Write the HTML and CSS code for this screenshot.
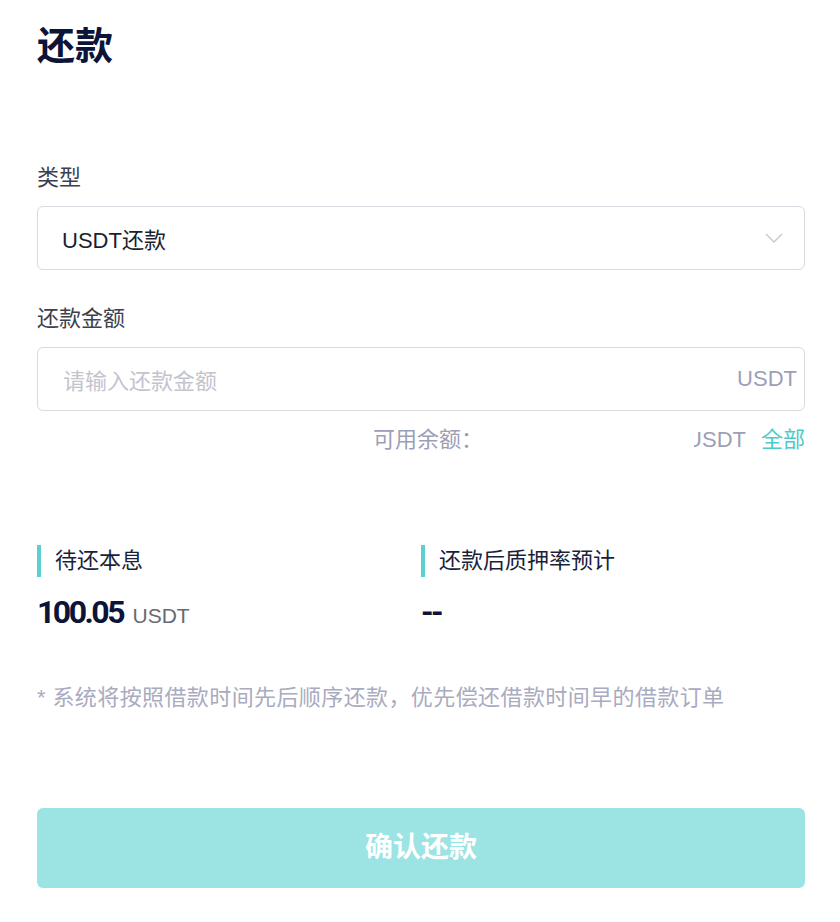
FILE: index.html
```html
<!DOCTYPE html>
<html lang="zh-CN">
<head>
    <meta charset="UTF-8">
    <title>还款</title>
    <link rel="stylesheet" href="styles.css">
</head>
<body>

<div class="repay-page">
    <h1 class="page-title">还款</h1>

    <div class="field-label first">类型</div>
    <div class="select-box">
        <span class="select-text">USDT还款</span>
        <svg class="chevron" width="18" height="10" viewBox="0 0 18 10">
            <path d="M1 1 L9 9 L17 1" fill="none" stroke="#c4c6d0" stroke-width="1.3"/>
        </svg>
    </div>

    <div class="field-label">还款金额</div>
    <div class="input-box">
        <span class="placeholder">请输入还款金额</span>
        <span class="unit">USDT</span>
    </div>

    <div class="balance-row">
        <span class="balance-label">可用余额：</span>
        <span class="balance-value"><span>USDT</span></span>
        <a href="#" class="balance-all">全部</a>
    </div>

    <div class="stats">
        <div class="stat">
            <div class="stat-label">待还本息</div>
            <div class="stat-value">100.05 <span class="stat-unit">USDT</span></div>
        </div>
        <div class="stat">
            <div class="stat-label">还款后质押率预计</div>
            <div class="stat-value">--</div>
        </div>
    </div>

    <div class="note">* 系统将按照借款时间先后顺序还款，优先偿还借款时间早的借款订单</div>

    <a href="#" class="confirm-button">确认还款</a>
</div>

</body>
</html>
```

FILE: styles.css
```css
body {
    margin: 0;
    font-family: "Liberation Sans", "Noto Sans CJK SC", sans-serif;
    background: #fff;
    color: #1c1f2e;
}
.repay-page {
    padding: 20px 35px 0 37px;
}
.page-title {
    margin: 0;
    font-size: 38px;
    line-height: 52px;
    font-weight: bold;
    color: #0c1438;
}
.field-label {
    font-size: 22px;
    line-height: 30px;
    color: #3c3f4e;
    margin: 34px 0 13px;
}
.field-label.first {
    margin-top: 91px;
}
.select-box, .input-box {
    box-sizing: border-box;
    height: 64px;
    border: 1px solid #d9dae2;
    border-radius: 6px;
    display: flex;
    align-items: center;
    justify-content: space-between;
    font-size: 22px;
}
.select-box {
    padding: 0 21px 0 24px;
}
.select-text {
    color: #1c1f2e;
}
.input-box {
    padding: 0 7px 0 25px;
}
.placeholder {
    color: #c3c4ce;
}
.unit {
    color: #9c9fb6;
}
.balance-row {
    display: flex;
    justify-content: flex-end;
    align-items: center;
    margin-top: 14px;
    font-size: 22px;
    line-height: 30px;
    color: #9c9fb6;
}
.balance-label {
    margin-right: 211px;
}
.balance-value {
    display: flex;
    justify-content: flex-end;
    width: 52px;
    overflow: hidden;
    white-space: nowrap;
}
.balance-all {
    margin-left: 15px;
    color: #4ccaca;
    text-decoration: none;
}
.stats {
    display: grid;
    grid-template-columns: 1fr 1fr;
    margin-top: 90px;
}
.stat-label {
    border-left: 4px solid #5ccfd0;
    padding-left: 14px;
    font-size: 22px;
    line-height: 32px;
    color: #1a1f3a;
}
.stat-value {
    margin-top: 15px;
    line-height: 40px;
    font-family: Roboto, "Liberation Sans", sans-serif;
    font-size: 32px;
    font-weight: bold;
    letter-spacing: -2.5px;
    color: #0c1438;
}
.stat-unit {
    font-family: "Liberation Sans", sans-serif;
    font-size: 21px;
    font-weight: normal;
    letter-spacing: 0;
    color: #686a72;
    margin-left: 4px;
}
.note {
    margin-top: 47px;
    font-size: 22px;
    line-height: 30px;
    letter-spacing: 0.4px;
    color: #a9abc0;
}
.confirm-button {
    display: block;
    margin-top: 95px;
    height: 80px;
    line-height: 80px;
    border-radius: 6px;
    background-color: #9ce3e4;
    color: #fff;
    text-align: center;
    font-size: 28px;
    font-weight: bold;
    text-decoration: none;
}
```
